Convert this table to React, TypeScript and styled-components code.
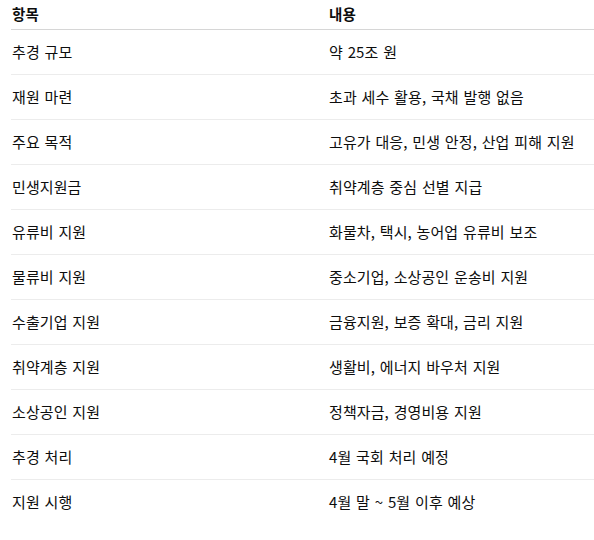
import React from "react";
import styled, { createGlobalStyle } from "styled-components";

const Global = createGlobalStyle`
  html, body { margin: 0; padding: 0; background: #ffffff; }
  body { font-family: "Noto Sans CJK KR", "Noto Sans", sans-serif; color: #0d0d0d; }
`;

const Wrap = styled.div`
  padding: 0 0 0 11px;
  overflow: hidden;
`;

const Table = styled.table`
  width: 600px;
  border-collapse: collapse;
  font-size: 15px;
  line-height: 20px;
  word-spacing: 1.3px;
  letter-spacing: 0.1px;
`;

const Th = styled.th`
  text-align: left;
  font-weight: 700;
  font-size: 14.5px;
  padding: 4px 0 5px 1px;
  border-bottom: 1px solid #d6d6d6;
  &:first-child { width: 316px; }
`;

const Td = styled.td`
  padding: 12px 0 12px 1px;
  border-bottom: 1px solid #ececec;
  font-weight: 400;
`;

const Tr = styled.tr<{ $last?: boolean }>`
  & > td { border-bottom-color: ${(p) => (p.$last ? "transparent" : "#ececec")}; }
`;

const rows: [string, string][] = [
  ["추경 규모", "약 25조 원"],
  ["재원 마련", "초과 세수 활용, 국채 발행 없음"],
  ["주요 목적", "고유가 대응, 민생 안정, 산업 피해 지원"],
  ["민생지원금", "취약계층 중심 선별 지급"],
  ["유류비 지원", "화물차, 택시, 농어업 유류비 보조"],
  ["물류비 지원", "중소기업, 소상공인 운송비 지원"],
  ["수출기업 지원", "금융지원, 보증 확대, 금리 지원"],
  ["취약계층 지원", "생활비, 에너지 바우처 지원"],
  ["소상공인 지원", "정책자금, 경영비용 지원"],
  ["추경 처리", "4월 국회 처리 예정"],
  ["지원 시행", "4월 말 ~ 5월 이후 예상"],
];

export default function App() {
  return (
    <>
      <Global />
      <Wrap>
        <Table>
          <thead>
            <tr>
              <Th>항목</Th>
              <Th>내용</Th>
            </tr>
          </thead>
          <tbody>
            {rows.map(([a, b], i) => (
              <Tr key={a} $last={i === rows.length - 1}>
                <Td>{a}</Td>
                <Td>{b}</Td>
              </Tr>
            ))}
          </tbody>
        </Table>
      </Wrap>
    </>
  );
}
